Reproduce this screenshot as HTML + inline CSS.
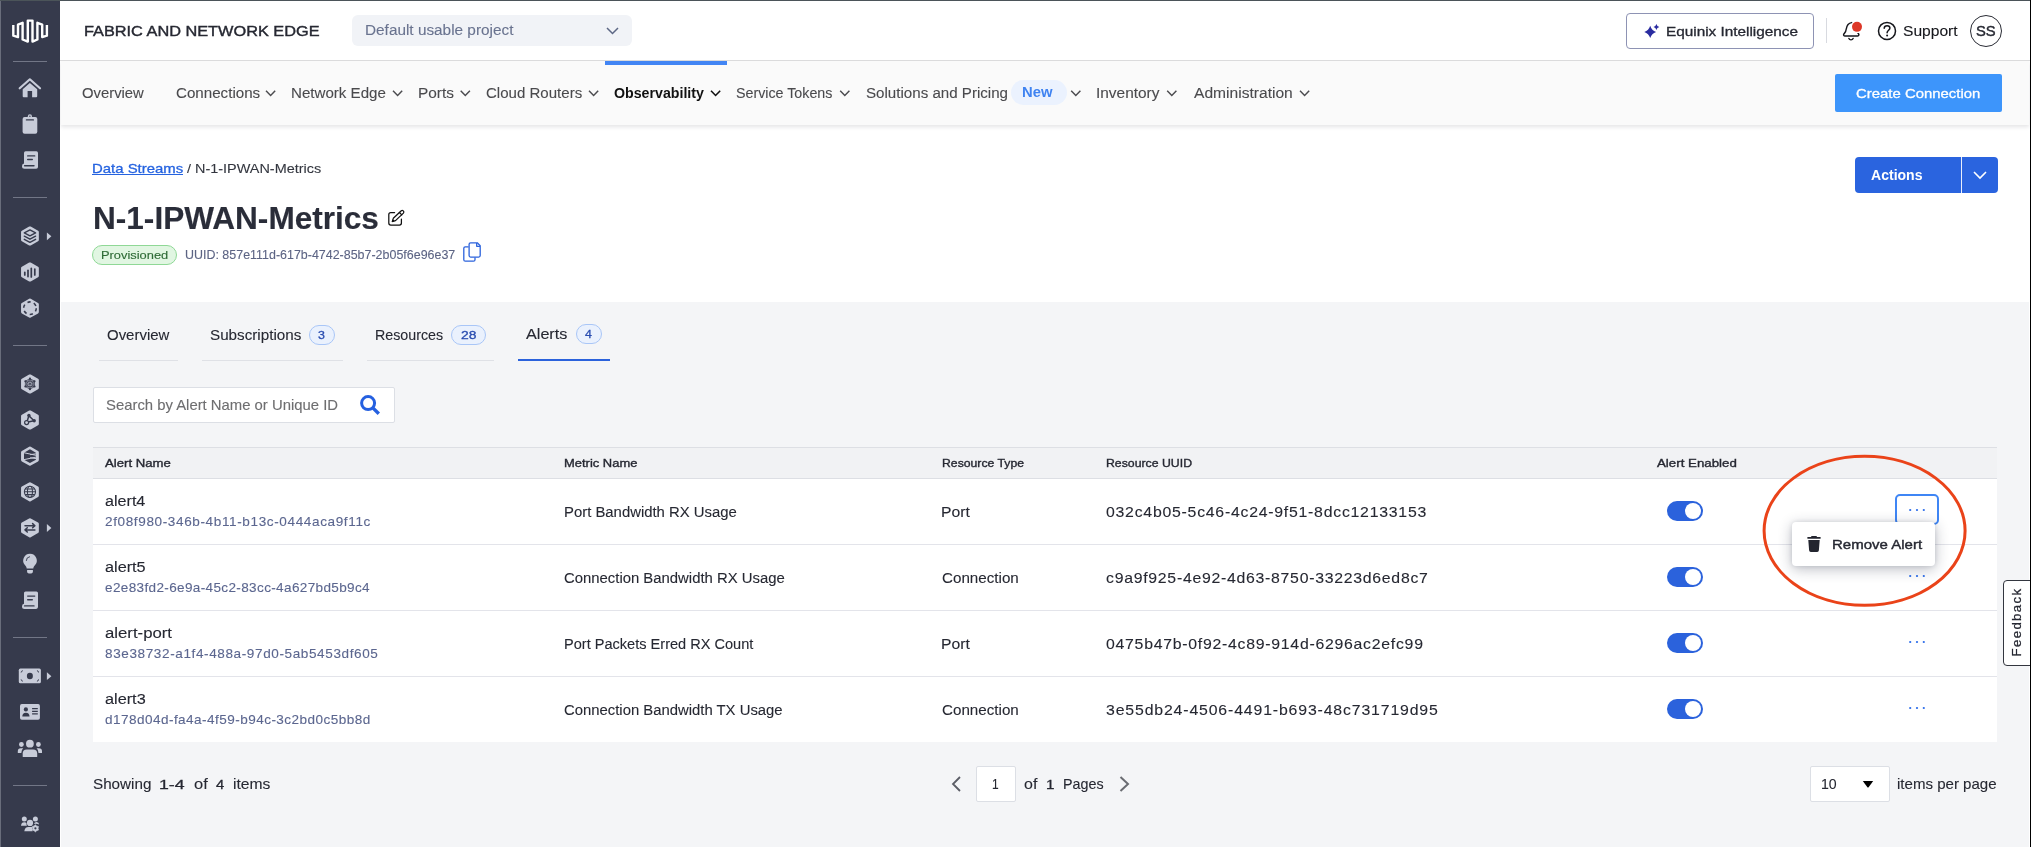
<!DOCTYPE html>
<html><head><meta charset="utf-8"><title>Fabric</title>
<style>
*{box-sizing:border-box;margin:0;padding:0}
html,body{width:2031px;height:847px;overflow:hidden;background:#fff}
body{font-family:"Liberation Sans",sans-serif;position:relative;color:#2a2c35}
.a{position:absolute}
.t{position:absolute;white-space:nowrap;line-height:1;transform-origin:0 0}
#side{left:0;top:0;width:60px;height:847px;background:#363a4c}
#topline{left:0;top:0;width:2030px;height:1px;background:#4b5459}
#rightline{left:2030px;top:0;width:1px;height:847px;background:#000;z-index:5}
#leftline{left:0;top:1px;width:1px;height:846px;background:#696d7b}
#hdr{left:61px;top:1px;width:1969px;height:59px;background:#fff}
#hdrb{left:60px;top:60px;width:1970px;height:1px;background:#dbdbdc}
#nav{left:61px;top:61px;width:1968px;height:64px;background:#fafafa;box-shadow:0 2px 4px rgba(30,35,50,.12)}
#main{left:61px;top:302px;width:1968px;height:545px;background:#f4f5f7}
.sd{position:absolute;height:1px;background:#6f7383}
svg{position:absolute;overflow:visible}
.bd{border:1px solid #a9c6f7;border-radius:10px;background:#eaf1fd}
.rb{left:93px;width:1904px;height:1px;background:#e3e4ea}
.tg{left:1667px;width:36px;height:20px;border-radius:10px;background:#2b62dc}
.tg i{position:absolute;left:18px;top:2px;width:16px;height:16px;border-radius:50%;background:#fff}
.dots{left:1909px;width:16px;height:3px}
.dots i{position:absolute;top:0;width:2.4px;height:2.4px;background:#2a6bea;border-radius:1.2px}
.dots i:nth-child(1){left:0}.dots i:nth-child(2){left:6.800px}.dots i:nth-child(3){left:13.600px}
#wrap{position:absolute;left:0;top:0;width:2031px;height:847px;will-change:transform}
</style></head><body><div id="wrap">
<div class="a" id="main"></div>
<div class="a" id="nav"></div>
<div class="a" id="hdr"></div>
<div class="a" id="hdrb"></div>
<div class="a" id="side"></div>
<div class="a" id="leftline"></div>
<div class="a" id="topline"></div>
<div class="a" id="rightline"></div>

<!-- header -->
<div class="a" style="left:352px;top:15px;width:280px;height:31px;background:#f1f3f7;border-radius:6px"></div>
<svg style="left:606px;top:27px" width="13" height="8" viewBox="0 0 13 8"><path d="M1 1 L6.5 6.5 L12 1" fill="none" stroke="#5d6785" stroke-width="1.5"/></svg>
<div class="a" style="left:1626px;top:13px;width:188px;height:36px;border:1px solid #8e93b4;border-radius:4px;background:#fff"></div>
<div class="a" style="left:1826px;top:18px;width:1px;height:25px;background:#d8dae0"></div>
<div class="a" style="left:1970px;top:15px;width:32px;height:32px;border:1.250px solid #2a2c35;border-radius:50%"></div>

<!-- nav -->
<div class="a" style="left:605px;top:61px;width:122px;height:4px;background:#4285f4"></div>
<div class="a" style="left:1011px;top:80px;width:56px;height:25px;border-radius:13px;background:#ebf2fe"></div>
<div class="a" style="left:1835px;top:74px;width:167px;height:38px;background:#3d95fb;border-radius:2px"></div>

<!-- page head -->
<div class="a" style="left:1855px;top:157px;width:143px;height:36px;background:#2a64df;border-radius:4px"></div>
<div class="a" style="left:1961px;top:157px;width:1px;height:36px;background:#e9eefb"></div>
<svg style="left:1973px;top:171px" width="14" height="8" viewBox="0 0 14 8"><path d="M1 1 L7 7 L13 1" fill="none" stroke="#fff" stroke-width="1.6"/></svg>
<div class="a" style="left:92px;top:245px;width:85px;height:20px;border:1px solid #8fd896;border-radius:10px;background:#e1f6e2"></div>
<div class="a" style="left:92px;top:174px;width:91px;height:1px;background:#2563e0"></div>

<!-- tabs -->
<div class="a" style="left:99px;top:360px;width:79px;height:1px;background:#dfe1e6"></div>
<div class="a" style="left:202px;top:360px;width:141px;height:1px;background:#dfe1e6"></div>
<div class="a" style="left:367px;top:360px;width:127px;height:1px;background:#dfe1e6"></div>
<div class="a" style="left:518px;top:359px;width:92px;height:2px;background:#2b62dc"></div>
<div class="a bd" style="left:309px;top:325px;width:26px;height:20px"></div>
<div class="a bd" style="left:451px;top:325px;width:35px;height:20px"></div>
<div class="a bd" style="left:576px;top:324px;width:26px;height:20px"></div>

<!-- search -->
<div class="a" style="left:93px;top:387px;width:302px;height:36px;background:#fff;border:1px solid #dcdfe5;border-radius:2px"></div>
<svg style="left:360px;top:395px" width="21" height="21" viewBox="0 0 21 21"><circle cx="8.100" cy="8.100" r="6.500" fill="none" stroke="#2560e0" stroke-width="3"/><path d="M12.600 12.600L18.800 18.800" stroke="#2560e0" stroke-width="3.400"/></svg>

<!-- table -->
<div class="a" style="left:93px;top:447px;width:1904px;height:32px;background:#f1f2f4;border-top:1px solid #dddfe4;border-bottom:1px solid #dddfe4"></div>
<div class="a" style="left:93px;top:479px;width:1904px;height:263px;background:#fff"></div>
<div class="a rb" style="top:544px"></div>
<div class="a rb" style="top:610px"></div>
<div class="a rb" style="top:676px"></div>

<div class="a tg" style="top:501px"><i></i></div>
<div class="a tg" style="top:567px"><i></i></div>
<div class="a tg" style="top:633px"><i></i></div>
<div class="a tg" style="top:699px"><i></i></div>

<div class="a" style="left:1895px;top:494px;width:44px;height:31px;border:2px solid #3f86f5;border-radius:5px;background:#fff"></div>
<svg style="left:1905px;top:506.4px" width="24" height="8" viewBox="0 0 24 8"><circle cx="5.200" cy="4" r="1.120" fill="#2a6bea"/><circle cx="12" cy="4" r="1.120" fill="#2a6bea"/><circle cx="18.800" cy="4" r="1.120" fill="#2a6bea"/></svg>
<svg style="left:1905px;top:572.1px" width="24" height="8" viewBox="0 0 24 8"><circle cx="5.200" cy="4" r="1.120" fill="#2a6bea"/><circle cx="12" cy="4" r="1.120" fill="#2a6bea"/><circle cx="18.800" cy="4" r="1.120" fill="#2a6bea"/></svg>
<svg style="left:1905px;top:638.2px" width="24" height="8" viewBox="0 0 24 8"><circle cx="5.200" cy="4" r="1.120" fill="#2a6bea"/><circle cx="12" cy="4" r="1.120" fill="#2a6bea"/><circle cx="18.800" cy="4" r="1.120" fill="#2a6bea"/></svg>
<svg style="left:1905px;top:704.3px" width="24" height="8" viewBox="0 0 24 8"><circle cx="5.200" cy="4" r="1.120" fill="#2a6bea"/><circle cx="12" cy="4" r="1.120" fill="#2a6bea"/><circle cx="18.800" cy="4" r="1.120" fill="#2a6bea"/></svg>

<!-- popup -->
<div class="a" style="left:1792px;top:522px;width:143px;height:44px;background:#fff;border-radius:4px;box-shadow:0 3px 14px rgba(30,35,60,.30),0 0 4px rgba(30,35,60,.13)"></div>
<svg style="left:1807px;top:536px" width="14" height="16" viewBox="0 0 14 16"><path d="M4.6 0h4.8l.7 1.1H13.6v1.7H.4V1.100H3.900z M1.300 3.900H12.700L11.900 14.300Q11.800 15.900 10.200 15.900H3.800Q2.200 15.900 2.100 14.300z" fill="#23252f"/></svg>

<!-- ellipse -->
<svg style="left:1755px;top:448px" width="220" height="166" viewBox="1755 448 220 166"><ellipse cx="1864.600" cy="530.800" rx="100.500" ry="74.500" fill="none" stroke="#ea4319" stroke-width="3"/></svg>

<!-- feedback -->
<div class="a" style="left:2003px;top:580px;width:32px;height:86px;border:1px solid #33363f;border-radius:4px;background:#fff"></div>

<!-- pagination -->
<div class="a" style="left:976px;top:766px;width:40px;height:36px;background:#fff;border:1px solid #dcdfe5;border-radius:2px"></div>
<div class="a" style="left:1810px;top:766px;width:80px;height:36px;background:#fff;border:1px solid #dcdfe5;border-radius:2px"></div>
<svg style="left:951px;top:776px" width="10" height="16" viewBox="0 0 10 16"><path d="M9 1 L2 8 L9 15" fill="none" stroke="#5b5d66" stroke-width="1.800"/></svg>
<svg style="left:1119px;top:776px" width="11" height="16" viewBox="0 0 11 16"><path d="M1.500 1 L9 8 L1.500 15" fill="none" stroke="#6a6c72" stroke-width="2"/></svg>
<svg style="left:1862px;top:781px" width="12" height="7" viewBox="0 0 12 7"><path d="M.8 0H11.200L6.600 6.200Q6 7 5.400 6.200z" fill="#000"/></svg>
<!-- nav chevrons -->
<svg style="left:0;top:0" width="2031" height="130" viewBox="0 0 2031 130"><g fill="none" stroke="#4b4b4f" stroke-width="1.450">
<path d="M266 90.700l4.600 4.800 4.600-4.800"/><path d="M393 90.700l4.600 4.800 4.600-4.800"/><path d="M460.700 90.700l4.600 4.800 4.600-4.800"/><path d="M589 90.700l4.600 4.800 4.600-4.800"/><path d="M711 90.700l4.600 4.800 4.600-4.800" stroke="#111" stroke-width="1.550"/><path d="M840.200 90.700l4.600 4.800 4.600-4.800"/><path d="M1071.200 90.700l4.600 4.800 4.600-4.800"/><path d="M1167.200 90.700l4.600 4.800 4.600-4.800"/><path d="M1300 90.700l4.600 4.800 4.600-4.800"/></g>
<!-- sparkle -->
<path d="M1650.20 25.70Q1651.70 30.40 1656.10 31.90Q1651.70 33.40 1650.20 38.10Q1648.70 33.40 1644.30 31.90Q1648.70 30.40 1650.20 25.70z M1656.40 24.00Q1657.00 26.40 1659.30 27.00Q1657.00 27.60 1656.40 30.00Q1655.80 27.60 1653.50 27.00Q1655.80 26.40 1656.40 24.00z" fill="#2a2ca0"/>
<!-- bell -->
<g fill="none" stroke="#15161b" stroke-width="1.450" stroke-linecap="round" stroke-linejoin="round"><path d="M1851.800 22.600C1848 23.200 1846.700 26 1846.300 28.800C1846.100 30.800 1845.500 32.400 1844.200 33.600C1843.200 34.600 1843.400 36 1844.800 36H1857.600C1859 36 1859.300 34.600 1858.300 33.600L1857.700 33"/><path d="M1848.900 38.500C1849.700 40.300 1852.300 40.300 1853.100 38.500"/></g>
<circle cx="1857" cy="26.850" r="6.300" fill="#fff"/><circle cx="1857" cy="26.850" r="5" fill="#dd3727"/>
<!-- help -->
<circle cx="1887" cy="30.900" r="8.500" fill="none" stroke="#15161b" stroke-width="1.500"/>
<path d="M1884.200 28.300C1884.300 26.400 1885.600 25.700 1887.100 25.700C1888.700 25.700 1889.900 26.700 1889.900 28.100C1889.900 30.200 1887.200 30.400 1887.100 32.700" fill="none" stroke="#15161b" stroke-width="1.500" stroke-linecap="round"/><circle cx="1887.100" cy="35.400" r="1" fill="#15161b"/>
</svg>
<!-- edit + copy -->
<svg style="left:380px;top:200px" width="120" height="70" viewBox="380 200 120 70"><g fill="none" stroke="#111" stroke-width="1.250" stroke-linecap="round" stroke-linejoin="round">
<path d="M394.600 212.500H390.800Q388.800 212.500 388.800 214.500V223Q388.800 225 390.800 225H399.400Q401.400 225 401.400 223V219.200"/>
<path d="M392.400 221.500L393.300 218.300L401.300 210.800Q402.300 210 403.200 210.900L403.500 211.200Q404.300 212.100 403.400 213.100L395.500 220.600Z"/><path d="M399.400 212.500L401.800 214.900"/><path d="M392.400 221.500l1.400-.4-1-1z" fill="#111"/></g>
<g fill="none" stroke="#2b62dc" stroke-width="1.300" stroke-linejoin="round"><path d="M468.600 246.800H465.300Q463.800 246.800 463.800 248.300V259.700Q463.800 261.200 465.300 261.200H473.500Q475 261.200 475 259.700V257.400"/><path d="M470.600 242.800H477.300L480.200 245.700V255.600Q480.200 257.100 478.700 257.100H470.600Q469.100 257.100 469.100 255.600V244.300Q469.100 242.800 470.600 242.800Z"/><path d="M476.700 243V246.300H480"/></g>
</svg>
<svg style="left:0;top:0" width="60" height="847" viewBox="0 0 60 847">
<path d="M13.300 25.100V35.700L18 37.100V24.700L22.600 22.800V39.500L27.800 41.600V20.600H32.500V41.600L37.400 39.500V22.800L42.200 24.700V37.100L46.900 35.700V25.100" fill="none" stroke="#fff" stroke-width="2.400" stroke-linejoin="round"/>
<rect x="13" y="61" width="34" height="1" fill="#727686"/>
<rect x="13" y="197" width="34" height="1" fill="#727686"/>
<rect x="13" y="345" width="34" height="1" fill="#727686"/>
<rect x="13" y="637" width="34" height="1" fill="#727686"/>
<rect x="13" y="785" width="34" height="1" fill="#727686"/>
<path d="M19.700 88.300L29.850 79.300L40 88.300" fill="none" stroke="#c8ccd9" stroke-width="2.200" stroke-linecap="round" stroke-linejoin="round"/>
<path d="M22.700 89.200L29.850 82.900L37.200 89.200V96.300Q37.200 97.300 36.200 97.300H32.100V90.900H27.600V97.300H23.700Q22.700 97.300 22.700 96.300Z" fill="#c8ccd9"/>
<rect x="22.600" y="117.100" width="14.700" height="16.600" rx="2" fill="#c8ccd9"/><circle cx="29.900" cy="116.400" r="2.100" fill="#c8ccd9"/><circle cx="29.900" cy="116.200" r="0.700" fill="#363a4c"/><path d="M26.400 119.900H33.400" stroke="#363a4c" stroke-width="1.300" stroke-linecap="round"/>
<path d="M25.600 151.3H36.400Q38 151.3 38 152.9V166.9Q38 168.7 36.200 168.7H24.500Q22 168.7 22 166.2Q22 163.7 24 163.5V152.9Q24 151.3 25.600 151.3Z" fill="#c8ccd9"/><path d="M27.700 155.9H34.700M27.700 159.5H32.300M24.600 165.7H34" stroke="#363a4c" stroke-width="1.400" stroke-linecap="round" fill="none"/>
<path d="M29.95 228.00 L37.25 232.10 L37.25 239.90 L29.95 244.00 L22.65 239.90 L22.65 232.10Z" fill="#c8ccd9" stroke="#c8ccd9" stroke-width="3.200" stroke-linejoin="round"/>
<path d="M46.900 232.4L51.400 236.3L46.900 240.2Z" fill="#c8ccd9"/>
<g fill="none" stroke="#363a4c" stroke-width="1.400" stroke-linejoin="round" stroke-linecap="round"><path d="M29.950 229.900L35.600 232.900L29.950 235.900L24.300 232.900Z"/><path d="M24.300 236.200L29.950 239.200L35.600 236.200"/><path d="M24.300 239.300L29.950 242.300L35.600 239.300"/></g>
<path d="M29.95 264.00 L37.25 268.10 L37.25 275.90 L29.95 280.00 L22.65 275.90 L22.65 268.10Z" fill="#c8ccd9" stroke="#c8ccd9" stroke-width="3.200" stroke-linejoin="round"/>
<g stroke="#363a4c" stroke-width="1.700" stroke-linecap="round"><path d="M24.800 272.400V275"/><path d="M28 270.300V276.600"/><path d="M31.300 268.400V277"/><path d="M34.800 269V275"/></g>
<path d="M29.95 300.20 L37.25 304.30 L37.25 312.10 L29.95 316.20 L22.65 312.10 L22.65 304.30Z" fill="#c8ccd9" stroke="#c8ccd9" stroke-width="3.200" stroke-linejoin="round"/>
<circle cx="29.950" cy="308.200" r="6.300" fill="none" stroke="#363a4c" stroke-width="1.600" stroke-dasharray="3.300 3.297"/>
<path d="M29.95 376.00 L37.25 380.10 L37.25 387.90 L29.95 392.00 L22.65 387.90 L22.65 380.10Z" fill="#c8ccd9" stroke="#c8ccd9" stroke-width="3.200" stroke-linejoin="round"/>
<path d="M29.95 378.60L34.54 381.25M29.95 378.60L34.54 386.55M29.95 378.60L29.95 389.20M29.95 378.60L25.36 386.55M29.95 378.60L25.36 381.25M34.54 381.25L34.54 386.55M34.54 381.25L29.95 389.20M34.54 381.25L25.36 386.55M34.54 381.25L25.36 381.25M34.54 386.55L29.95 389.20M34.54 386.55L25.36 386.55M34.54 386.55L25.36 381.25M29.95 389.20L25.36 386.55M29.95 389.20L25.36 381.25M25.36 386.55L25.36 381.25" fill="none" stroke="#363a4c" stroke-width="0.750"/>
<circle cx="29.95" cy="378.60" r="1.050" fill="#363a4c"/><circle cx="34.54" cy="381.25" r="1.050" fill="#363a4c"/><circle cx="34.54" cy="386.55" r="1.050" fill="#363a4c"/><circle cx="29.95" cy="389.20" r="1.050" fill="#363a4c"/><circle cx="25.36" cy="386.55" r="1.050" fill="#363a4c"/><circle cx="25.36" cy="381.25" r="1.050" fill="#363a4c"/>
<path d="M29.95 412.00 L37.25 416.10 L37.25 423.90 L29.95 428.00 L22.65 423.90 L22.65 416.10Z" fill="#c8ccd9" stroke="#c8ccd9" stroke-width="3.200" stroke-linejoin="round"/>
<g stroke="#363a4c" stroke-width="1.500" fill="none"><path d="M28.900 415.700L26.800 422.300M28.900 415.700L34 420.700M26.800 422.300L34 420.700"/></g><circle cx="28.900" cy="415.500" r="1.700" fill="#363a4c"/><circle cx="34.200" cy="420.700" r="1.700" fill="#363a4c"/><circle cx="26.600" cy="422.600" r="2" fill="#c8ccd9" stroke="#363a4c" stroke-width="1.200"/>
<path d="M29.95 448.20 L37.25 452.30 L37.25 460.10 L29.95 464.20 L22.65 460.10 L22.65 452.30Z" fill="#c8ccd9" stroke="#c8ccd9" stroke-width="3.200" stroke-linejoin="round"/>
<path d="M29.950 449.300L35.900 452.700V459.700L29.950 463.100L24 459.700V452.700Z" fill="#363a4c"/>
<g stroke="#c8ccd9" stroke-width="1" fill="none" stroke-linecap="round"><path d="M24.200 452.800L36 455.300M24.200 459.600L36 457.100M30.500 454.600L36 453.800M30.500 457.800L36 458.600"/></g>
<path d="M29.95 483.80 L37.25 487.90 L37.25 495.70 L29.95 499.80 L22.65 495.70 L22.65 487.90Z" fill="#c8ccd9" stroke="#c8ccd9" stroke-width="3.200" stroke-linejoin="round"/>
<g fill="none" stroke="#363a4c" stroke-width="1.050"><circle cx="29.950" cy="491.800" r="5.600"/><ellipse cx="29.950" cy="491.800" rx="2.500" ry="5.600"/><path d="M24.400 491.800H35.500M25.200 489H34.700M25.200 494.600H34.700"/></g>
<path d="M29.95 519.80 L37.25 523.90 L37.25 531.70 L29.95 535.80 L22.65 531.70 L22.65 523.90Z" fill="#c8ccd9" stroke="#c8ccd9" stroke-width="3.200" stroke-linejoin="round"/>
<path d="M46.900 524.1L51.400 528.0L46.900 531.9Z" fill="#c8ccd9"/>
<g fill="none" stroke="#363a4c" stroke-width="1.500" stroke-linecap="round" stroke-linejoin="round"><path d="M25 525.700H34.800M32.600 523.600L34.900 525.700L32.600 527.800"/><path d="M34.900 529.900H25.100M27.300 527.800L25 529.900L27.300 532"/></g>
<path d="M30 553.800A6.800 6.800 0 0 1 34.700 565.500C33.800 566.500 33.400 567.400 33.300 568.600H26.700C26.600 567.400 26.200 566.500 25.300 565.500A6.800 6.800 0 0 1 30 553.800Z" fill="#c8ccd9"/><path d="M27.100 570H32.900V571.400Q32.900 573.500 30 573.500Q27.100 573.500 27.100 571.400Z" fill="#c8ccd9"/><path d="M26.300 560.500A3.800 3.800 0 0 1 29.600 556.700" fill="none" stroke="#363a4c" stroke-width="0.900" stroke-linecap="round"/>
<path d="M25.600 591.5H36.400Q38 591.5 38 593.1V607.1Q38 608.9 36.200 608.9H24.500Q22 608.9 22 606.4Q22 603.9 24 603.7V593.1Q24 591.5 25.600 591.5Z" fill="#c8ccd9"/><path d="M27.700 596.1H34.700M27.700 599.7H32.300M24.600 605.9H34" stroke="#363a4c" stroke-width="1.400" stroke-linecap="round" fill="none"/>
<rect x="18.800" y="668.600" width="22.100" height="14.700" rx="1.600" fill="#c8ccd9"/><ellipse cx="29.900" cy="675.950" rx="3" ry="3.300" fill="#363a4c"/><g fill="none" stroke="#363a4c" stroke-width="1"><path d="M20.800 672.200Q22.200 672 22.400 670.400M39 672.200Q37.600 672 37.400 670.400M20.800 679.700Q22.200 679.900 22.400 681.500M39 679.700Q37.600 679.900 37.400 681.500"/></g>
<path d="M46.900 672.3L51.400 676.2L46.900 680.1Z" fill="#c8ccd9"/>
<rect x="20" y="704.100" width="19.900" height="15.600" rx="1.800" fill="#c8ccd9"/><circle cx="25.900" cy="709.400" r="2.100" fill="#363a4c"/><path d="M22.300 716.600Q22.300 712.700 25.900 712.700Q29.500 712.700 29.500 716.600Z" fill="#363a4c"/><path d="M32.100 708.700H37.800M32.100 711.300H37.800M32.100 713.900H37.800" stroke="#363a4c" stroke-width="1.200"/>
<circle cx="29.900" cy="743.700" r="3.900" fill="#c8ccd9"/><path d="M22.700 756.800V753.600Q22.700 749.500 26.800 749.500H33.100Q37.200 749.500 37.200 753.600V756.800Q37.200 757 36.400 757H23.500Q22.700 757 22.700 756.800Z" fill="#c8ccd9"/><circle cx="21.400" cy="744.500" r="2.400" fill="#c8ccd9"/><circle cx="38.400" cy="744.500" r="2.400" fill="#c8ccd9"/><path d="M17.800 752.900V751.300Q17.800 748.300 20.800 748.300H23.200Q21.300 750 21.300 752.900Z" fill="#c8ccd9"/><path d="M42 752.900V751.300Q42 748.300 39 748.300H36.600Q38.500 750 38.500 752.900Z" fill="#c8ccd9"/>
<circle cx="24.300" cy="818.900" r="2.500" fill="#c8ccd9"/><circle cx="35.400" cy="818.900" r="2.500" fill="#c8ccd9"/><circle cx="30" cy="822.900" r="3.100" fill="#c8ccd9"/><path d="M21 825.700Q21.300 822.300 24.300 822.300Q25.900 822.300 26.500 823.300Q26.300 824.600 26.900 825.700Z" fill="#c8ccd9"/><path d="M24.300 831.300Q24.800 827 28.500 827H31.500Q32 827 32.400 827.200Q31.400 829.300 32.600 831.300Z" fill="#c8ccd9"/><path d="M34 823.900Q34.500 822.100 36.600 822.100Q38.800 822.300 39.200 824.600Q37.500 823.400 34 823.900Z" fill="#c8ccd9"/>
<path d="M35.40 824.70 L36.75 825.96 L38.52 826.50 L38.10 828.30 L38.52 830.10 L36.75 830.64 L35.40 831.90 L34.05 830.64 L32.28 830.10 L32.70 828.30 L32.28 826.50 L34.05 825.96Z" fill="#c8ccd9" stroke="#c8ccd9" stroke-width="0.600" stroke-linejoin="round"/><circle cx="35.400" cy="828.300" r="1.100" fill="#363a4c"/>
</svg>
<span class="t" style="left:83.97px;top:24px;font-size:14.7px;font-weight:normal;color:#262832;-webkit-text-stroke:0.4px #262832;transform:scaleX(1.1101);">FABRIC AND NETWORK EDGE</span>
<span class="t" style="left:365.00px;top:23px;font-size:14.0px;font-weight:normal;color:#69738f;-webkit-text-stroke:0.1px #69738f;transform:scaleX(1.0959);">Default usable project</span>
<span class="t" style="left:1666.41px;top:25px;font-size:13.4px;font-weight:normal;color:#262832;-webkit-text-stroke:0.3px #262832;transform:scaleX(1.1442);">Equinix Intelligence</span>
<span class="t" style="left:1903.15px;top:24px;font-size:14.0px;font-weight:normal;color:#16171c;-webkit-text-stroke:0.1px #16171c;transform:scaleX(1.1133);">Support</span>
<span class="t" style="left:1976.20px;top:24px;font-size:14.7px;font-weight:normal;color:#262832;-webkit-text-stroke:0.4px #262832;transform:scaleX(1.0045);">SS</span>
<span class="t" style="left:81.72px;top:86px;font-size:14.0px;font-weight:normal;color:#4a4a4d;-webkit-text-stroke:0.1px #4a4a4d;transform:scaleX(1.0591);">Overview</span>
<span class="t" style="left:175.73px;top:86px;font-size:14.0px;font-weight:normal;color:#4a4a4d;-webkit-text-stroke:0.1px #4a4a4d;transform:scaleX(1.0816);">Connections</span>
<span class="t" style="left:291.12px;top:86px;font-size:14.0px;font-weight:normal;color:#4a4a4d;-webkit-text-stroke:0.1px #4a4a4d;transform:scaleX(1.0790);">Network Edge</span>
<span class="t" style="left:418.00px;top:86px;font-size:14.0px;font-weight:normal;color:#4a4a4d;-webkit-text-stroke:0.1px #4a4a4d;transform:scaleX(1.1002);">Ports</span>
<span class="t" style="left:486.34px;top:86px;font-size:14.0px;font-weight:normal;color:#4a4a4d;-webkit-text-stroke:0.1px #4a4a4d;transform:scaleX(1.0746);">Cloud Routers</span>
<span class="t" style="left:614.37px;top:86px;font-size:14.0px;font-weight:bold;color:#111;transform:scaleX(1.0139);">Observability</span>
<span class="t" style="left:736.42px;top:86px;font-size:14.0px;font-weight:normal;color:#4a4a4d;-webkit-text-stroke:0.1px #4a4a4d;transform:scaleX(1.0183);">Service Tokens</span>
<span class="t" style="left:865.97px;top:86px;font-size:14.0px;font-weight:normal;color:#4a4a4d;-webkit-text-stroke:0.1px #4a4a4d;transform:scaleX(1.0797);">Solutions and Pricing</span>
<span class="t" style="left:1022.35px;top:85px;font-size:14.0px;font-weight:bold;color:#3f83f1;transform:scaleX(1.0570);">New</span>
<span class="t" style="left:1096.35px;top:86px;font-size:14.0px;font-weight:normal;color:#4a4a4d;-webkit-text-stroke:0.1px #4a4a4d;transform:scaleX(1.1019);">Inventory</span>
<span class="t" style="left:1193.51px;top:86px;font-size:14.0px;font-weight:normal;color:#4a4a4d;-webkit-text-stroke:0.1px #4a4a4d;transform:scaleX(1.1134);">Administration</span>
<span class="t" style="left:1856.02px;top:87px;font-size:13.4px;font-weight:normal;color:#fff;-webkit-text-stroke:0.3px #fff;transform:scaleX(1.1134);">Create Connection</span>
<span class="t" style="left:91.70px;top:162px;font-size:13.6px;font-weight:normal;color:#2563e0;-webkit-text-stroke:0.3px #2563e0;transform:scaleX(1.0968);">Data Streams</span>
<span class="t" style="left:186.95px;top:162px;font-size:13.7px;font-weight:normal;color:#33363f;-webkit-text-stroke:0.1px #33363f;transform:scaleX(1.0547);">/ N-1-IPWAN-Metrics</span>
<span class="t" style="left:92.55px;top:204px;font-size:30.8px;font-weight:bold;color:#2a2d39;-webkit-text-stroke:0.15px #2a2d39;transform:scaleX(1.0251);">N-1-IPWAN-Metrics</span>
<span class="t" style="left:100.84px;top:249px;font-size:11.7px;font-weight:normal;color:#2d6a35;-webkit-text-stroke:0.12px #2d6a35;transform:scaleX(1.1004);">Provisioned</span>
<span class="t" style="left:185.13px;top:249px;font-size:12.2px;font-weight:normal;color:#5c6484;-webkit-text-stroke:0.1px #5c6484;transform:scaleX(1.0218);">UUID: 857e111d-617b-4742-85b7-2b05f6e96e37</span>
<span class="t" style="left:1870.56px;top:168px;font-size:14.0px;font-weight:bold;color:#fff;transform:scaleX(1.0033);">Actions</span>
<span class="t" style="left:106.79px;top:328px;font-size:14.1px;font-weight:normal;color:#262832;-webkit-text-stroke:0.1px #262832;transform:scaleX(1.0618);">Overview</span>
<span class="t" style="left:209.87px;top:328px;font-size:14.1px;font-weight:normal;color:#262832;-webkit-text-stroke:0.1px #262832;transform:scaleX(1.0790);">Subscriptions</span>
<span class="t" style="left:318.48px;top:329px;font-size:11.6px;font-weight:normal;color:#2a4db0;-webkit-text-stroke:0.3px #2a4db0;transform:scaleX(1.0701);">3</span>
<span class="t" style="left:375.19px;top:328px;font-size:14.1px;font-weight:normal;color:#262832;-webkit-text-stroke:0.1px #262832;transform:scaleX(1.0121);">Resources</span>
<span class="t" style="left:460.86px;top:329px;font-size:11.6px;font-weight:normal;color:#2a4db0;-webkit-text-stroke:0.3px #2a4db0;transform:scaleX(1.1986);">28</span>
<span class="t" style="left:526.12px;top:327px;font-size:14.1px;font-weight:normal;color:#262832;-webkit-text-stroke:0.12px #262832;transform:scaleX(1.1474);">Alerts</span>
<span class="t" style="left:585.00px;top:328px;font-size:11.6px;font-weight:normal;color:#2a4db0;-webkit-text-stroke:0.3px #2a4db0;transform:scaleX(1.0669);">4</span>
<span class="t" style="left:106.19px;top:398px;font-size:14.1px;font-weight:normal;color:#6e6e70;-webkit-text-stroke:0.12px #6e6e70;transform:scaleX(1.0540);">Search by Alert Name or Unique ID</span>
<span class="t" style="left:105.10px;top:458px;font-size:11.4px;font-weight:normal;color:#262832;-webkit-text-stroke:0.36px #262832;transform:scaleX(1.1544);">Alert Name</span>
<span class="t" style="left:564.12px;top:458px;font-size:11.4px;font-weight:normal;color:#262832;-webkit-text-stroke:0.36px #262832;transform:scaleX(1.1367);">Metric Name</span>
<span class="t" style="left:941.85px;top:458px;font-size:11.4px;font-weight:normal;color:#262832;-webkit-text-stroke:0.36px #262832;transform:scaleX(1.0735);">Resource Type</span>
<span class="t" style="left:1105.54px;top:458px;font-size:11.4px;font-weight:normal;color:#262832;-webkit-text-stroke:0.36px #262832;transform:scaleX(1.0785);">Resource UUID</span>
<span class="t" style="left:1657.00px;top:458px;font-size:11.4px;font-weight:normal;color:#262832;-webkit-text-stroke:0.36px #262832;transform:scaleX(1.1676);">Alert Enabled</span>
<span class="t" style="left:1832.15px;top:538px;font-size:13.3px;font-weight:normal;color:#262832;-webkit-text-stroke:0.4px #262832;transform:scaleX(1.1293);">Remove Alert</span>
<span class="t" style="left:92.67px;top:777px;font-size:14.1px;font-weight:normal;color:#262832;-webkit-text-stroke:0.1px #262832;transform:scaleX(1.0801);">Showing</span>
<span class="t" style="left:159.36px;top:778px;font-size:13.6px;font-weight:normal;color:#262832;-webkit-text-stroke:0.3px #262832;transform:scaleX(1.3014);">1-4</span>
<span class="t" style="left:193.79px;top:777px;font-size:14.1px;font-weight:normal;color:#262832;-webkit-text-stroke:0.1px #262832;transform:scaleX(1.1678);">of</span>
<span class="t" style="left:216.00px;top:778px;font-size:13.6px;font-weight:normal;color:#262832;-webkit-text-stroke:0.3px #262832;transform:scaleX(1.0882);">4</span>
<span class="t" style="left:232.96px;top:777px;font-size:14.1px;font-weight:normal;color:#262832;-webkit-text-stroke:0.1px #262832;transform:scaleX(1.1091);">items</span>
<span class="t" style="left:992.31px;top:777px;font-size:14.1px;font-weight:normal;color:#262832;-webkit-text-stroke:0.1px #262832;transform:scaleX(0.8500);">1</span>
<span class="t" style="left:1024.00px;top:777px;font-size:14.1px;font-weight:normal;color:#262832;-webkit-text-stroke:0.1px #262832;transform:scaleX(1.1332);">of</span>
<span class="t" style="left:1046.19px;top:778px;font-size:13.6px;font-weight:normal;color:#262832;-webkit-text-stroke:0.3px #262832;transform:scaleX(1.1201);">1</span>
<span class="t" style="left:1063.28px;top:777px;font-size:14.1px;font-weight:normal;color:#262832;-webkit-text-stroke:0.1px #262832;transform:scaleX(1.0157);">Pages</span>
<span class="t" style="left:1821.20px;top:777px;font-size:14.1px;font-weight:normal;color:#262832;-webkit-text-stroke:0.1px #262832;transform:scaleX(1.0024);">10</span>
<span class="t" style="left:1897.49px;top:777px;font-size:14.1px;font-weight:normal;color:#262832;-webkit-text-stroke:0.1px #262832;transform:scaleX(1.0682);">items per page</span>
<span class="t" style="left:104.72px;top:494px;font-size:14.0px;font-weight:normal;color:#262832;-webkit-text-stroke:0.1px #262832;transform:scaleX(1.1513);">alert4</span>
<span class="t" style="left:105.34px;top:516px;font-size:12.1px;font-weight:normal;color:#5b668f;-webkit-text-stroke:0.1px #5b668f;letter-spacing:0.557px;transform:scaleX(1.1200);">2f08f980-346b-4b11-b13c-0444aca9f11c</span>
<span class="t" style="left:563.94px;top:505px;font-size:14.0px;font-weight:normal;color:#262832;-webkit-text-stroke:0.1px #262832;transform:scaleX(1.0627);">Port Bandwidth RX Usage</span>
<span class="t" style="left:941.48px;top:505px;font-size:14.0px;font-weight:normal;color:#262832;-webkit-text-stroke:0.1px #262832;transform:scaleX(1.1226);">Port</span>
<span class="t" style="left:1106.12px;top:505px;font-size:14.4px;font-weight:normal;color:#262832;-webkit-text-stroke:0.1px #262832;letter-spacing:0.683px;transform:scaleX(1.1000);">032c4b05-5c46-4c24-9f51-8dcc12133153</span>
<span class="t" style="left:104.71px;top:560px;font-size:14.0px;font-weight:normal;color:#262832;-webkit-text-stroke:0.1px #262832;transform:scaleX(1.1607);">alert5</span>
<span class="t" style="left:105.45px;top:582px;font-size:12.1px;font-weight:normal;color:#5b668f;-webkit-text-stroke:0.1px #5b668f;letter-spacing:0.315px;transform:scaleX(1.1200);">e2e83fd2-6e9a-45c2-83cc-4a627bd5b9c4</span>
<span class="t" style="left:564.34px;top:571px;font-size:14.0px;font-weight:normal;color:#262832;-webkit-text-stroke:0.1px #262832;transform:scaleX(1.0621);">Connection Bandwidth RX Usage</span>
<span class="t" style="left:941.93px;top:571px;font-size:14.0px;font-weight:normal;color:#262832;-webkit-text-stroke:0.1px #262832;transform:scaleX(1.0838);">Connection</span>
<span class="t" style="left:1106.05px;top:571px;font-size:14.4px;font-weight:normal;color:#262832;-webkit-text-stroke:0.1px #262832;letter-spacing:0.655px;transform:scaleX(1.1000);">c9a9f925-4e92-4d63-8750-33223d6ed8c7</span>
<span class="t" style="left:104.70px;top:626px;font-size:14.0px;font-weight:normal;color:#262832;-webkit-text-stroke:0.1px #262832;transform:scaleX(1.1961);">alert-port</span>
<span class="t" style="left:105.39px;top:648px;font-size:12.1px;font-weight:normal;color:#5b668f;-webkit-text-stroke:0.1px #5b668f;letter-spacing:0.543px;transform:scaleX(1.1200);">83e38732-a1f4-488a-97d0-5ab5453df605</span>
<span class="t" style="left:563.96px;top:637px;font-size:14.0px;font-weight:normal;color:#262832;-webkit-text-stroke:0.1px #262832;transform:scaleX(1.0399);">Port Packets Erred RX Count</span>
<span class="t" style="left:941.48px;top:637px;font-size:14.0px;font-weight:normal;color:#262832;-webkit-text-stroke:0.1px #262832;transform:scaleX(1.1226);">Port</span>
<span class="t" style="left:1106.12px;top:637px;font-size:14.4px;font-weight:normal;color:#262832;-webkit-text-stroke:0.1px #262832;letter-spacing:0.665px;transform:scaleX(1.1000);">0475b47b-0f92-4c89-914d-6296ac2efc99</span>
<span class="t" style="left:104.71px;top:692px;font-size:14.0px;font-weight:normal;color:#262832;-webkit-text-stroke:0.1px #262832;transform:scaleX(1.1619);">alert3</span>
<span class="t" style="left:105.45px;top:714px;font-size:12.1px;font-weight:normal;color:#5b668f;-webkit-text-stroke:0.1px #5b668f;letter-spacing:0.408px;transform:scaleX(1.1200);">d178d04d-fa4a-4f59-b94c-3c2bd0c5bb8d</span>
<span class="t" style="left:564.34px;top:703px;font-size:14.0px;font-weight:normal;color:#262832;-webkit-text-stroke:0.1px #262832;transform:scaleX(1.0613);">Connection Bandwidth TX Usage</span>
<span class="t" style="left:941.93px;top:703px;font-size:14.0px;font-weight:normal;color:#262832;-webkit-text-stroke:0.1px #262832;transform:scaleX(1.0838);">Connection</span>
<span class="t" style="left:1105.98px;top:703px;font-size:14.4px;font-weight:normal;color:#262832;-webkit-text-stroke:0.1px #262832;letter-spacing:0.777px;transform:scaleX(1.1000);">3e55db24-4506-4491-b693-48c731719d95</span>
<span class="t" style="left:2016.600px;top:622.400px;font-size:13.300px;color:#262832;letter-spacing:1.3px;-webkit-text-stroke:.22px #262832;transform:translate(-50%,-50%) rotate(-90deg);transform-origin:center">Feedback</span>
</div></body></html>
